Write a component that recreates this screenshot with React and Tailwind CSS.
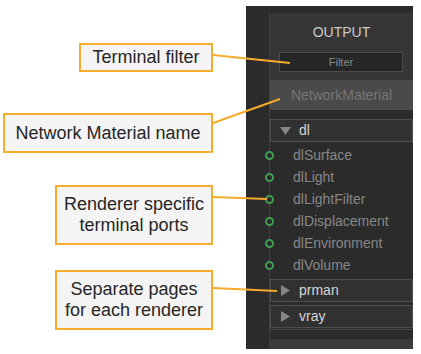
import React from 'react';

const callouts = [
  { text: ['Terminal filter'], box: 'left-[79px] top-[43px] w-[134px] h-[29px]' },
  { text: ['Network Material name'], box: 'left-[3px] top-[113px] w-[210px] h-[40px]' },
  { text: ['Renderer specific', 'terminal ports'], box: 'left-[55px] top-[185px] w-[158px] h-[60px]' },
  { text: ['Separate pages', 'for each renderer'], box: 'left-[55px] top-[270px] w-[158px] h-[60px]' },
];

const leaders = [
  [213, 55, 290, 63],
  [213, 123, 280, 99],
  [213, 197, 267, 199],
  [213, 288, 277, 291],
];

const ports = ['dlSurface', 'dlLight', 'dlLightFilter', 'dlDisplacement', 'dlEnvironment', 'dlVolume'];

const Tri = ({ down }) => (
  <svg width="11" height="11" viewBox="0 0 11 11" className="shrink-0">
    {down ? <path d="M0 2 L11 2 L5.5 10 Z" fill="#858585" /> : <path d="M1 0 L10 5.5 L1 11 Z" fill="#858585" />}
  </svg>
);

const Header = ({ label, down, className = '' }) => (
  <div className={`h-[23px] border border-[#4d4d4d] bg-[#313131] flex items-center pl-[9px] ${className}`}>
    <Tri down={down} />
    <span className="ml-[8px] text-[14px] text-[#d6d6d6]">{label}</span>
  </div>
);

const Port = ({ name }) => (
  <div className="h-[22px] flex items-center">
    <div className="-ml-[5px] w-[9px] h-[9px] rounded-full border-2 border-[#3f9e52] bg-[#2a2a2a] shrink-0" />
    <span className="ml-[19px] text-[14px] text-[#878787]">{name}</span>
  </div>
);

export default function App() {
  return (
    <div className="relative w-[421px] h-[354px] bg-white overflow-hidden font-['Liberation_Sans',Arial,sans-serif]">
      {/* output node panel */}
      <div className="pl-[246px] pt-[6px]">
        <div className="w-[167px] h-[343px] flex flex-col">
          <div className="h-[7px] bg-[#2a2a2a]" />
          <div className="flex flex-1">
            <div className="w-[24px] bg-[#2b2b2b] border-r border-[#414141]" />
            <div className="flex-1 flex flex-col bg-[#363636]">
              <div className="h-[39px] pt-[11px] text-center text-[14px] leading-[16px] text-[#cacaca]">OUTPUT</div>
              <div className="ml-[9px] mr-[10px] h-[20px] border border-[#4b4b4b] bg-[#262626] flex items-center justify-center text-[11px] text-[#8a8a8a]">
                Filter
              </div>
              <div className="mt-[8px] h-[30px] bg-[#4a4a4a] flex items-center justify-center text-[14px] text-[#767676]">
                NetworkMaterial
              </div>
              <div className="flex-1 flex flex-col bg-[#2b2b2b] pt-[9px]">
                <Header label="dl" down />
                <div className="mt-[2px]">
                  {ports.map((p) => (
                    <Port key={p} name={p} />
                  ))}
                </div>
                <Header label="prman" className="mt-[3px]" />
                <Header label="vray" className="mt-[3px]" />
                <div className="mt-[1px] h-px bg-[#484848]" />
                <div className="h-[9px]" />
                <div className="flex-1 bg-[#3a3a3a]" />
              </div>
            </div>
          </div>
        </div>
      </div>

      {/* annotations */}
      {callouts.map((c, i) => (
        <div
          key={i}
          className={`absolute ${c.box} border-2 border-[#f6ad2c] bg-[#f4f4f4] flex flex-col items-center justify-center text-[18px] leading-[21px] text-[#262626]`}
        >
          {c.text.map((t) => (
            <span key={t}>{t}</span>
          ))}
        </div>
      ))}
      <svg className="absolute inset-0 pointer-events-none" width="421" height="354">
        {leaders.map(([x1, y1, x2, y2], i) => (
          <line key={i} x1={x1} y1={y1} x2={x2} y2={y2} stroke="#f6ab2a" strokeWidth="2" />
        ))}
      </svg>
    </div>
  );
}
